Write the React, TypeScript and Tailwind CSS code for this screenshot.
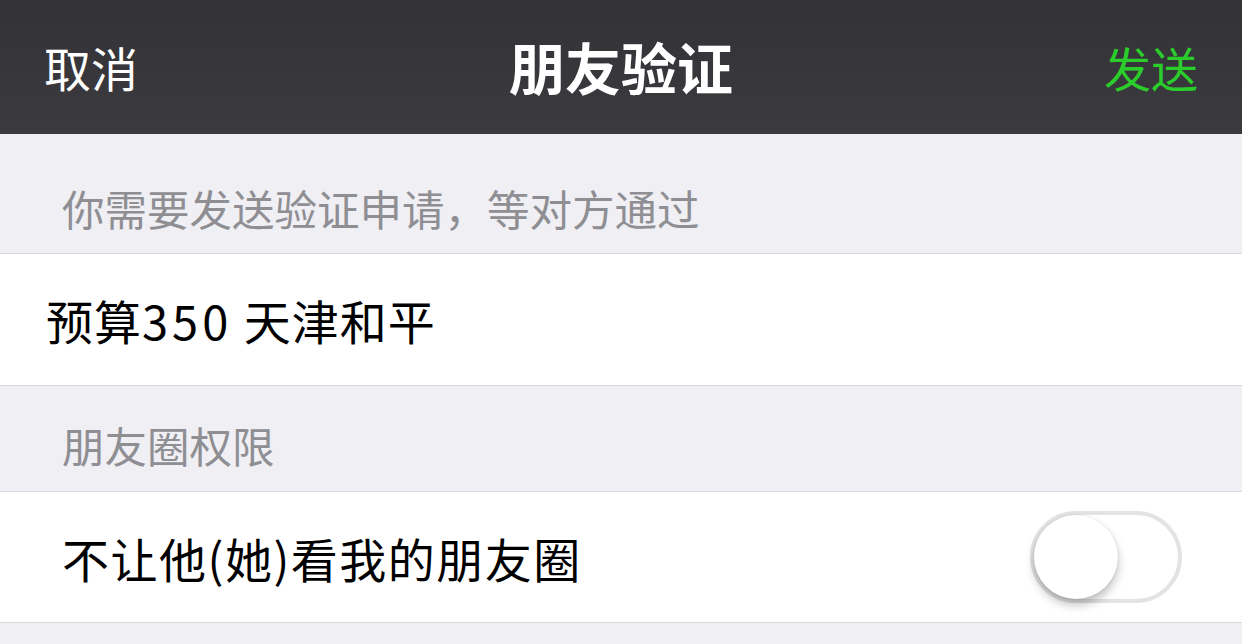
export default function App() {
  const font = { fontFamily: '"Noto Sans CJK SC", "Noto Sans", sans-serif' };
  return (
    <div className="w-[1242px] h-[644px] overflow-hidden bg-[#efeff4]" style={font}>
      {/* navigation bar */}
      <div className="h-[134px] flex items-center justify-between px-[44px] pb-[2px] bg-gradient-to-b from-[#333237] to-[#3b3a3f] relative">
        <span className="text-white text-[47px] leading-none">取消</span>
        <span className="absolute left-1/2 -translate-x-1/2 text-white text-[56px] font-bold leading-none">朋友验证</span>
        <span className="text-[#2bcd2b] text-[47px] leading-none">发送</span>
      </div>

      {/* verification message */}
      <div className="h-[120px] flex items-end pb-[24px] pl-[62px] border-b border-[#d8d8dc]">
        <span className="text-[#8e8e93] text-[42.5px] leading-none">你需要发送验证申请，等对方通过</span>
      </div>
      <div className="h-[132px] bg-white flex items-center pl-[46px] border-b border-[#d8d8dc]">
        <span className="text-black text-[47px] leading-none tracking-[1px]">
          预算<span className="tracking-[4px]">350</span> 天津和平
        </span>
      </div>

      {/* moments permission */}
      <div className="h-[106px] flex items-end pb-[25px] pl-[62px] border-b border-[#d8d8dc]">
        <span className="text-[#8e8e93] text-[42.5px] leading-none">朋友圈权限</span>
      </div>
      <div className="h-[131px] bg-white flex items-center justify-between pl-[62px] pr-[60px] border-b border-[#d8d8dc]">
        <span className="text-black text-[47px] leading-none tracking-[1.5px]">不让他(她)看我的朋友圈</span>
        <div className="w-[152px] h-[92px] rounded-full border-[4px] border-[#e3e3e6] bg-white relative">
          <div className="absolute left-0 top-0 w-[84px] h-[84px] rounded-full bg-white shadow-[0_6px_10px_rgba(0,0,0,0.25),0_0_2px_rgba(0,0,0,0.12)]" />
        </div>
      </div>
    </div>
  );
}
